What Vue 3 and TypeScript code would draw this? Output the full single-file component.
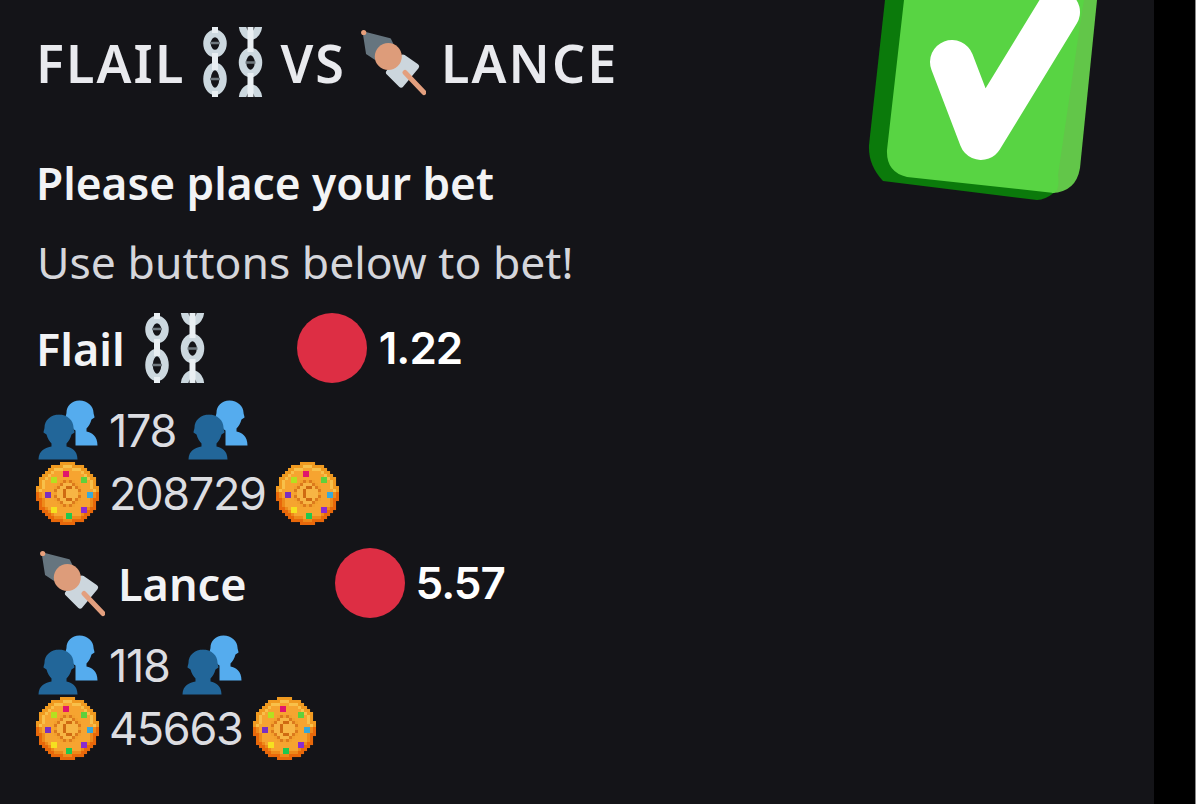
<script setup lang="ts">
import { computed } from 'vue'

interface Cell { x: number; y: number; c: string }

const gems: Record<string, string> = {
  '9,3': '#e0156c', '15,5': '#5fd03b', '17,10': '#38a8d8', '15,15': '#8a2bd0',
  '10,17': '#1fc850', '5,15': '#f5e020', '3,10': '#7a30c0', '5,5': '#b5e020'
}
const glyph = new Set(['10,8', '11,8', '9,9', '9,10', '9,11', '10,12', '11,12'])

const coinCells = computed<Cell[]>(() => {
  const out: Cell[] = []
  for (let y = 0; y < 21; y++) {
    for (let x = 0; x < 21; x++) {
      const dx = x - 10
      const dy = y - 10
      const d = Math.hypot(dx, dy)
      if (d > 10.4) continue
      let c = '#f6a430'
      if (d > 9.2) c = dy < 0 ? '#f09a20' : '#e8680a'
      else if (d > 8.2) c = dy < 0 ? '#f8c04a' : '#ee8a1a'
      else if (d > 3.4 && d < 4.6) c = (x + y) % 2 ? '#dc7a1c' : '#f2a02c'
      else if (d <= 3.4) c = '#f7b544'
      for (const key of Object.keys(gems)) {
        const [gx, gy] = key.split(',').map(Number)
        if (x >= gx && x <= gx + 1 && y >= gy && y <= gy + 1) c = gems[key]
      }
      if (glyph.has(`${x},${y}`)) c = '#cf6a12'
      out.push({ x, y, c })
    }
  }
  return out
})

interface Bet {
  name: string
  icon: string
  odds: string
  users: string
  coins: string
  before: boolean
}

const bets: Bet[] = [
  { name: 'Flail', icon: 'chain', odds: '1.22', users: '178', coins: '208729', before: false },
  { name: 'Lance', icon: 'skewer', odds: '5.57', users: '118', coins: '45663', before: true }
]
</script>

<template>
  <div class="page">
    <svg class="defs" width="0" height="0" aria-hidden="true">
      <defs>
        <symbol id="chain" viewBox="0 0 64 70">
          <g fill="none" stroke="#ccd8df" stroke-width="7.5">
            <ellipse cx="14.5" cy="16.5" rx="8" ry="10" />
            <ellipse cx="14.5" cy="52" rx="8" ry="12.5" />
            <ellipse cx="50" cy="35.5" rx="8" ry="11" />
            <ellipse cx="50" cy="-2" rx="8" ry="11" />
            <ellipse cx="50" cy="72" rx="8" ry="11" />
          </g>
          <g fill="none" stroke="#e9eff3" stroke-width="6">
            <path d="M14.5 0V6M14.5 26V43M14.5 64V70" />
            <path d="M50 0V25M50 46V70" />
          </g>
          <path d="M9.5 16H19.5M9.5 52H19.5M45 35.5H55" stroke="#6f787e" stroke-width="2.5" fill="none" />
        </symbol>
        <symbol id="skewer" viewBox="0 0 65 65">
          <path d="M2.7 3 29 9.7 33 18 15 30 6 24Z" fill="#66757f" stroke="#66757f" stroke-width="2" stroke-linejoin="round" />
          <circle cx="2.7" cy="3" r="2.6" fill="#e9a07b" />
          <path d="M42 28 55 37 40 55 28 43Z" fill="#ccd6dd" stroke="#ccd6dd" stroke-width="6" stroke-linejoin="round" />
          <circle cx="27.3" cy="27" r="13.5" fill="#dd9c7a" />
          <path d="M44 43 63 63" stroke="#e39f7e" stroke-width="5" stroke-linecap="round" />
        </symbol>
        <symbol id="users" viewBox="-1.5 -1.5 63 63">
          <path fill="#55acee" d="M42 0c8 0 14 6 14 12 0 2 1 3 1 5l-3 2c-1 4-3 7-5 9v3c5 1 11 4 11 14H38V30c-3-2-6-5-7-11l-3-2c0-2 1-3 1-5 0-6 5-12 13-12Z" />
          <path fill="#226699" d="M21 14c9 0 15 6 15 13 0 2 1 3 1 5l-3 2c-1 4-3 7-5 9v3c5 1 11 4 11 13H1c0-9 7-12 13-13v-3c-2-2-4-5-5-9l-3-2c0-2 1-3 1-5 0-7 6-13 15-13Z" />
        </symbol>
        <symbol id="coin" viewBox="0 0 21 21">
          <rect v-for="cell in coinCells" :key="`${cell.x}-${cell.y}`" :x="cell.x" :y="cell.y" width="1.02" height="1.02" :fill="cell.c" />
        </symbol>
      </defs>
    </svg>

    <main class="embed">
      <section class="content">
        <h1 class="title">
          FLAIL
          <svg class="emoji-title"><use href="#chain" /></svg>
          VS
          <svg class="emoji-title"><use href="#skewer" /></svg>
          LANCE
        </h1>
        <h2 class="subtitle">Please place your bet</h2>
        <p class="hint">Use buttons below to bet!</p>

        <article v-for="bet in bets" :key="bet.name" class="bet">
          <div class="bet-head">
            <svg v-if="bet.before" class="emoji-head first"><use :href="`#${bet.icon}`" /></svg>
            <span class="bet-name">{{ bet.name }}</span>
            <svg v-if="!bet.before" class="emoji-head"><use :href="`#${bet.icon}`" /></svg>
            <span class="dot"></span>
            <span class="odds">{{ bet.odds }}</span>
          </div>
          <div class="stat">
            <svg class="emoji"><use href="#users" /></svg>
            <span>{{ bet.users }}</span>
            <svg class="emoji"><use href="#users" /></svg>
          </div>
          <div class="stat">
            <svg class="emoji coin"><use href="#coin" /></svg>
            <span>{{ bet.coins }}</span>
            <svg class="emoji coin"><use href="#coin" /></svg>
          </div>
        </article>
      </section>

      <svg class="thumb" viewBox="860 0 240 205" aria-label="Check mark">
        <path fill="#0b7a0b" d="M885 0 869 145Q868 165 883 181L1037 200Q1045 200 1055 192L1060 100 1000 0Z" />
        <path fill="#62c649" d="M1040 0H1097L1080 168Q1076 192 1052 193Z" />
        <path fill="#58d443" d="M904 0 887 150Q886 172 907 177L1054 193Q1060 190 1058 175L1080 25 1084 0Z" />
        <path d="M952 62 981 138 1058 12" fill="none" stroke="#fff" stroke-width="44" stroke-linecap="round" stroke-linejoin="round" />
      </svg>
    </main>
    <aside class="strip"></aside>
  </div>
</template>

<style>
html, body { margin: 0; background: #000; }
</style>

<style scoped>
.page {
  display: flex;
  width: 1196px;
  height: 804px;
  overflow: hidden;
  background: #000;
  font-family: "Noto Sans", "Open Sans", sans-serif;
}
.defs { position: absolute; }
.embed {
  display: flex;
  justify-content: space-between;
  align-items: flex-start;
  width: 1154px;
  height: 804px;
  background: #141418;
  box-sizing: border-box;
  padding-left: 36px;
  padding-right: 54px;
}
.strip {
  flex: 1;
  border-right: 1px solid #8a8a8a;
}
.content { padding-top: 27px; }
.title {
  display: flex;
  align-items: center;
  gap: 15px;
  margin: 0;
  height: 70px;
  font-size: 52px;
  letter-spacing: 2.1px;
  font-weight: 600;
  color: #e9eaee;
  white-space: nowrap;
}
.emoji-title { width: 65px; height: 70px; }
.subtitle {
  margin: 58px 0 0;
  font-size: 44.2px;
  line-height: 57px;
  font-weight: 600;
  color: #f2f3f5;
}
.hint {
  margin: 21px 0 4px 1px;
  font-size: 44.5px;
  line-height: 57px;
  color: #d5d6db;
}
.bet { margin-top: 23px; }
.bet-head {
  display: flex;
  align-items: center;
  gap: 15px;
  height: 70px;
  margin-bottom: 16px;
  font-weight: 600;
  font-size: 45px;
  color: #f2f3f5;
}
.emoji-head { width: 65px; height: 70px; margin-left: 2px; }
.emoji-head.first { margin-left: 4px; margin-right: -2px; }
.dot {
  width: 70px;
  height: 70px;
  margin: 0 -3px 0 75px;
  border-radius: 50%;
  background: #dd2e44;
}
.bet-name + .dot { margin: 0 -4px 0 73px; }
.odds {
  font-family: Inter, "Noto Sans", sans-serif;
  font-size: 44px;
  letter-spacing: -1px;
  color: #fff;
}
.stat {
  display: flex;
  align-items: center;
  gap: 10px;
  height: 63px;
  font-family: Inter, "Noto Sans", sans-serif;
  font-size: 45px;
  letter-spacing: -1.3px;
  color: #dcdde1;
}
.emoji { width: 63px; height: 63px; }
.coin { filter: blur(0.7px); }
.thumb {
  width: 240px;
  height: 205px;
  flex: none;
}
</style>
